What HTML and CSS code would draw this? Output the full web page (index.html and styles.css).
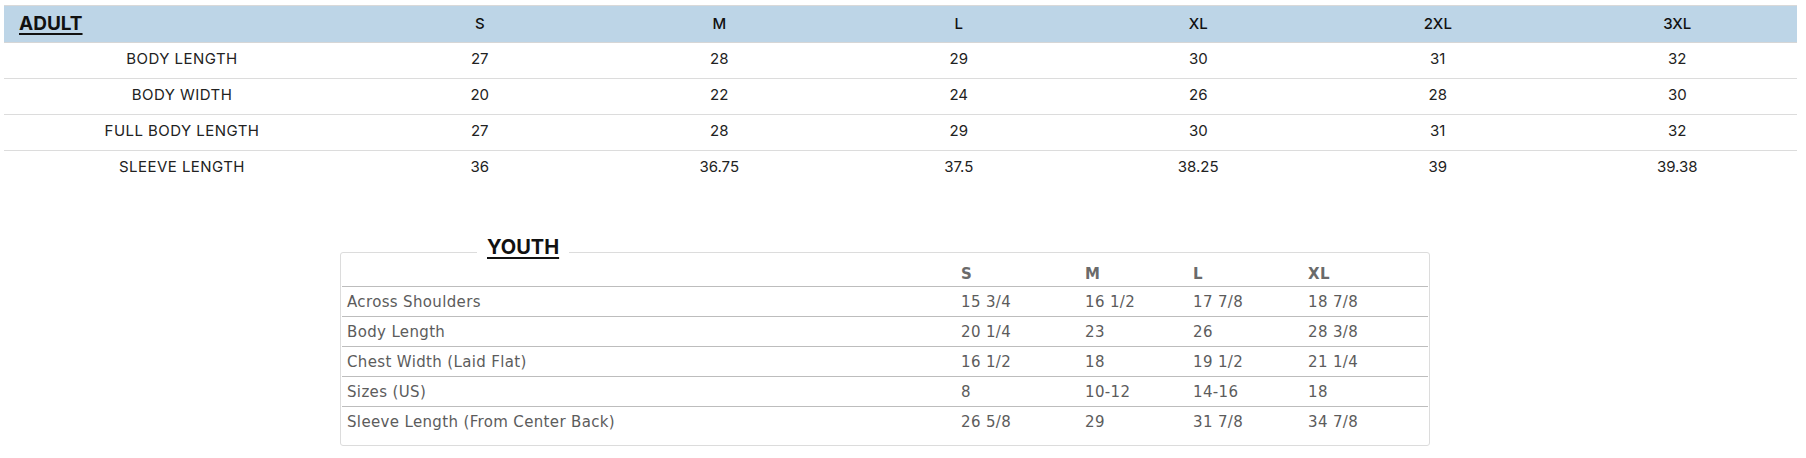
FILE: index.html
```html
<!DOCTYPE html>
<html lang="en">
<head>
<meta charset="utf-8">
<title>Size Chart</title>
<link rel="stylesheet" href="styles.css">
</head>
<body>
<div class="page">
  <table class="adult">
    <colgroup>
      <col class="adult-label-col">
      <col class="adult-size-col"><col class="adult-size-col"><col class="adult-size-col">
      <col class="adult-size-col"><col class="adult-size-col"><col class="adult-size-col">
    </colgroup>
    <thead>
      <tr>
        <th class="adult-title">ADULT</th>
        <th>S</th><th>M</th><th>L</th><th>XL</th><th>2XL</th><th>3XL</th>
      </tr>
    </thead>
    <tbody>
      <tr><td>BODY LENGTH</td><td>27</td><td>28</td><td>29</td><td>30</td><td>31</td><td>32</td></tr>
      <tr><td>BODY WIDTH</td><td>20</td><td>22</td><td>24</td><td>26</td><td>28</td><td>30</td></tr>
      <tr><td>FULL BODY LENGTH</td><td>27</td><td>28</td><td>29</td><td>30</td><td>31</td><td>32</td></tr>
      <tr><td>SLEEVE LENGTH</td><td>36</td><td>36.75</td><td>37.5</td><td>38.25</td><td>39</td><td>39.38</td></tr>
    </tbody>
  </table>

  <section class="youth">
    <h2 class="youth-title">YOUTH</h2>
    <table class="youth-table">
      <colgroup>
        <col class="yc-label"><col class="yc-s"><col class="yc-m"><col class="yc-l"><col class="yc-xl">
      </colgroup>
      <thead>
        <tr><th></th><th>S</th><th>M</th><th>L</th><th>XL</th></tr>
      </thead>
      <tbody>
        <tr><td>Across Shoulders</td><td>15 3/4</td><td>16 1/2</td><td>17 7/8</td><td>18 7/8</td></tr>
        <tr><td>Body Length</td><td>20 1/4</td><td>23</td><td>26</td><td>28 3/8</td></tr>
        <tr><td>Chest Width (Laid Flat)</td><td>16 1/2</td><td>18</td><td>19 1/2</td><td>21 1/4</td></tr>
        <tr><td>Sizes (US)</td><td>8</td><td>10-12</td><td>14-16</td><td>18</td></tr>
        <tr><td>Sleeve Length (From Center Back)</td><td>26 5/8</td><td>29</td><td>31 7/8</td><td>34 7/8</td></tr>
      </tbody>
    </table>
  </section>
</div>
</body>
</html>
```

FILE: styles.css
```css
* { box-sizing: border-box; }

html, body {
  margin: 0;
  padding: 0;
  background: #ffffff;
}

.page {
  padding: 5px 9px 0 4px;
}

/* ---------- Adult table ---------- */
.adult {
  width: 100%;
  border-collapse: separate;
  border-spacing: 0;
  table-layout: fixed;
  font-family: "Inter", "Liberation Sans", sans-serif;
}

.adult-label-col { width: 356px; }

.adult th {
  background: #bdd5e7;
  border-top: 1px solid #d9d9d9;
  height: 37px;
  padding: 0;
  line-height: 36px;
  font-size: 15px;
  font-weight: 500;
  color: #111111;
  text-align: center;
}

.adult th.adult-title {
  text-align: left;
  padding-left: 15px;
  font-size: 19px;
  font-weight: 700;
  color: #111111;
  text-decoration: underline;
  text-decoration-thickness: 2px;
  text-underline-offset: 3px;
}

.adult td {
  border-top: 1px solid #dcdcdc;
  padding: 0 0 3px;
  line-height: 32px;
  font-size: 15px;
  color: #222222;
  text-align: center;
}

.adult td:first-child {
  letter-spacing: 0.45px;
}

.adult tbody tr:first-child td {
  border-top-color: #d6d6d6;
}

/* ---------- Youth table ---------- */
.youth {
  position: relative;
  margin: 66px 0 0 336px;
  width: 1090px;
  padding: 0 1px 9px;
  border: 1px solid #dcdcdc;
  border-radius: 3px;
}

.youth-title {
  position: absolute;
  top: -16px;
  left: 136px;
  margin: 0;
  padding: 0 10px;
  background: #ffffff;
  font-family: "Inter", "Liberation Sans", sans-serif;
  font-size: 20px;
  line-height: 20px;
  font-weight: 700;
  color: #111111;
  text-decoration: underline;
  text-decoration-thickness: 2px;
  text-underline-offset: 3px;
}

.youth-table {
  width: 1086px;
  border-collapse: separate;
  border-spacing: 0;
  table-layout: fixed;
  font-family: "DejaVu Sans", "Noto Sans", sans-serif;
  font-size: 15px;
  letter-spacing: 0.35px;
  color: #5c5c5c;
}

.yc-label { width: 614px; }
.yc-s { width: 124px; }
.yc-m { width: 108px; }
.yc-l { width: 115px; }
.yc-xl { width: 125px; }

.youth-table th {
  padding: 11px 5px 2px;
  line-height: 20px;
  text-align: left;
  font-weight: 700;
  color: #6a6a6a;
}

.youth-table td {
  border-top: 1px solid #bdbdbd;
  padding: 5px 5px 4px;
  line-height: 20px;
  text-align: left;
  white-space: nowrap;
}
```
